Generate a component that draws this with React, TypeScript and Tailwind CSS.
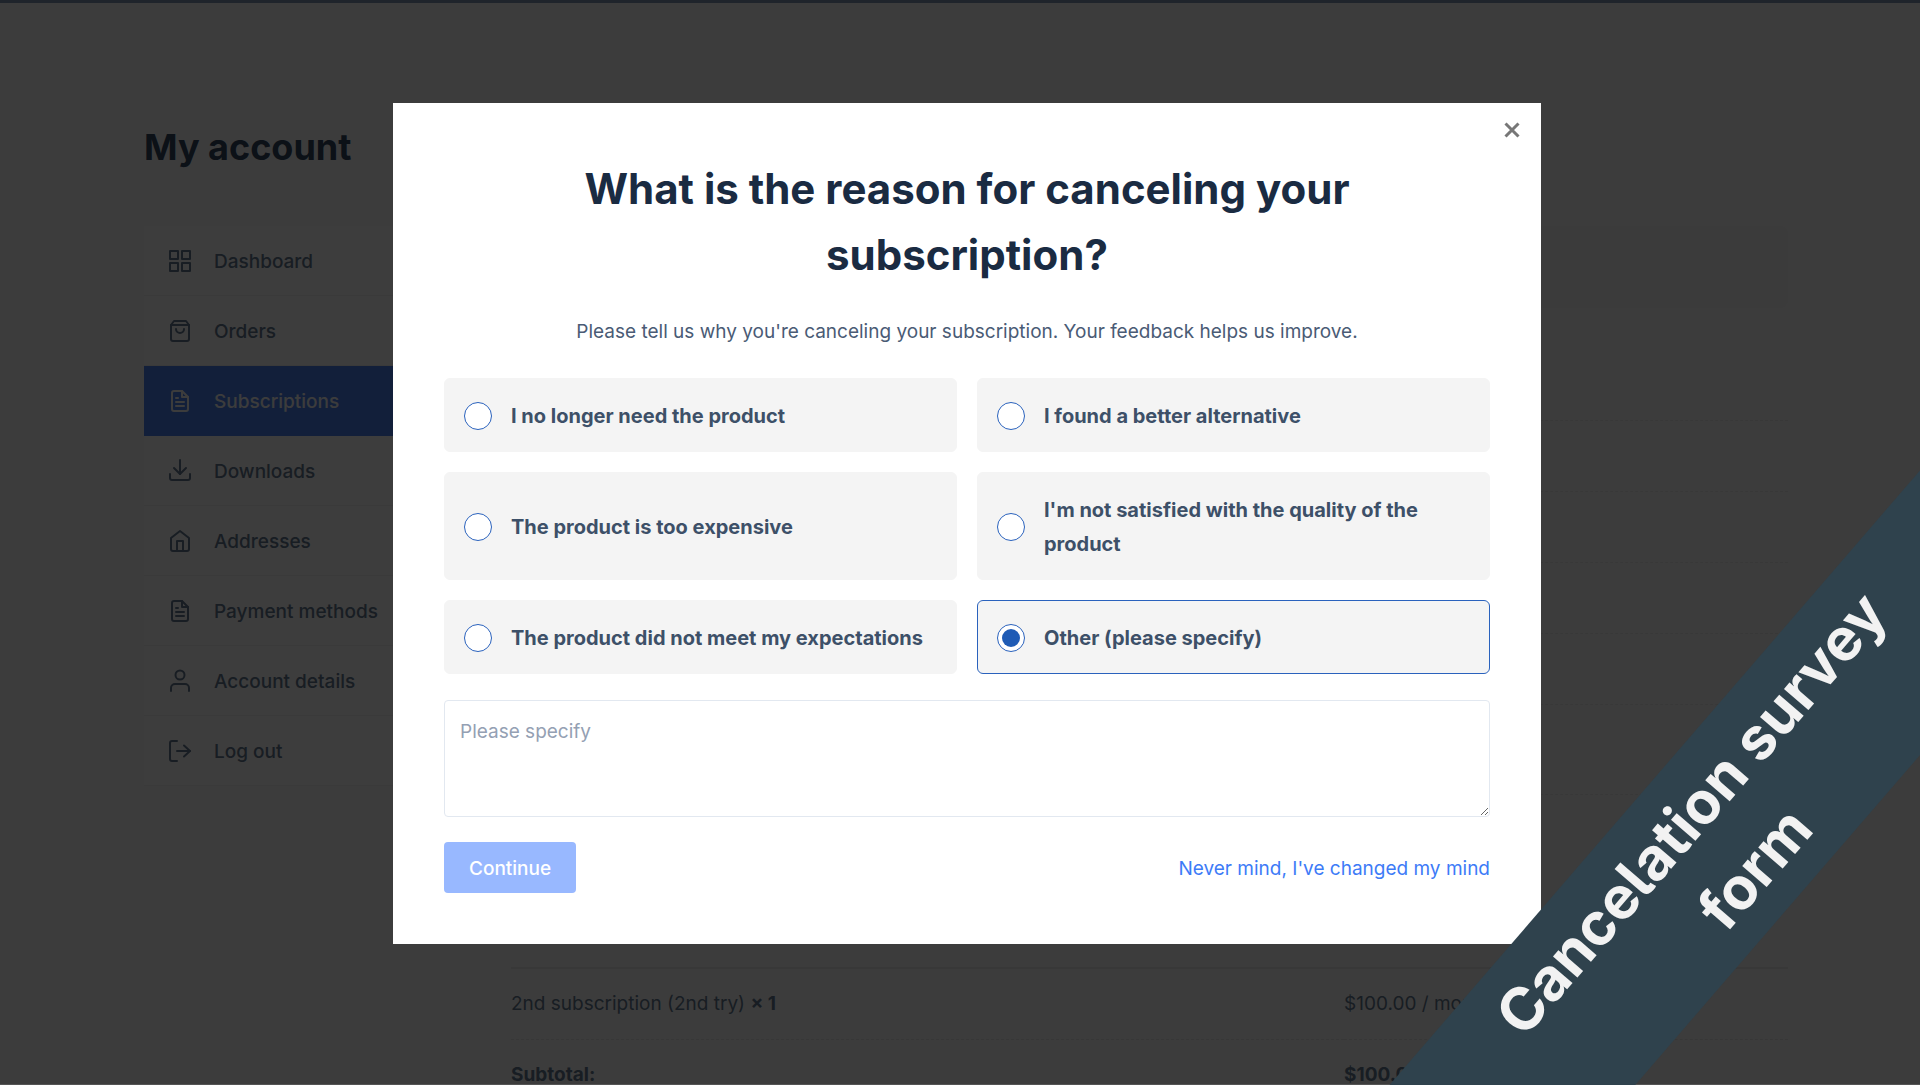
import { useState } from "react";
import type { ReactNode } from "react";

const iconPaths: Record<string, ReactNode> = {
  grid: (
    <>
      <rect x="2" y="2" width="8" height="8" />
      <rect x="14" y="2" width="8" height="8" />
      <rect x="2" y="14" width="8" height="8" />
      <rect x="14" y="14" width="8" height="8" />
    </>
  ),
  bag: (
    <>
      <path d="M6 2h12l3 4v14a2 2 0 0 1-2 2H5a2 2 0 0 1-2-2V6z" />
      <path d="M3 6h18" />
      <path d="M8 10a4 4 0 0 0 8 0" />
    </>
  ),
  file: (
    <>
      <path d="M14 2H6a2 2 0 0 0-2 2v16a2 2 0 0 0 2 2h12a2 2 0 0 0 2-2V8z" />
      <path d="M14 2v6h6" />
      <path d="M8 9h2M8 13h8M8 17h8" />
    </>
  ),
  download: (
    <>
      <path d="M2 15v4a2 2 0 0 0 2 2h16a2 2 0 0 0 2-2v-4" />
      <path d="M6 9l6 6 6-6" />
      <path d="M12 15V1" />
    </>
  ),
  home: (
    <>
      <path d="M3 9l9-7 9 7v11a2 2 0 0 1-2 2H5a2 2 0 0 1-2-2z" />
      <path d="M9 22V12h6v10" />
    </>
  ),
  user: (
    <>
      <path d="M3 22v-3a4 4 0 0 1 4-4h10a4 4 0 0 1 4 4v3" />
      <circle cx="12" cy="6" r="4.500" />
    </>
  ),
  logout: (
    <>
      <path d="M9 22H4a2 2 0 0 1-2-2V4a2 2 0 0 1 2-2h5" />
      <path d="M16 17.500l6-5.500-6-5.500" />
      <path d="M22 12H9" />
    </>
  ),
};

function Icon({ name }: { name: string }) {
  return (
    <svg
      viewBox="0 0 24 24"
      className="size-6 shrink-0"
      fill="none"
      stroke="currentColor"
      strokeWidth="2"
      strokeLinecap="round"
      strokeLinejoin="round"
      aria-hidden="true"
    >
      {iconPaths[name]}
    </svg>
  );
}

const navItems = [
  { label: "Dashboard", icon: "grid" },
  { label: "Orders", icon: "bag" },
  { label: "Subscriptions", icon: "file", active: true },
  { label: "Downloads", icon: "download" },
  { label: "Addresses", icon: "home" },
  { label: "Payment methods", icon: "file" },
  { label: "Account details", icon: "user" },
  { label: "Log out", icon: "logout" },
];

const reasons = [
  "I no longer need the product",
  "I found a better alternative",
  "The product is too expensive",
  "I'm not satisfied with the quality of the product",
  "The product did not meet my expectations",
  "Other (please specify)",
];

function AccountNav() {
  return (
    <nav className="w-80 shrink-0 self-start bg-[#f4f4f4]">
      <ul>
        {navItems.map((item) => (
          <li key={item.label}>
            <a
              href="#"
              className={
                item.active
                  ? "flex h-[70px] items-center gap-[22px] bg-[#487ce8] px-6 text-[#f0f0f0]"
                  : "flex h-[70px] items-center gap-[22px] border-b border-[#e8e8e8] px-6 text-[#60748a]"
              }
            >
              <Icon name={item.icon} />
              <span className="pt-[3px] font-medium">{item.label}</span>
            </a>
          </li>
        ))}
      </ul>
    </nav>
  );
}

function SubscriptionDetails() {
  return (
    <section className="min-w-0 flex-1 text-[#60748a]">
      <div className="h-[82px] rounded-lg bg-[#e9e9e9]" />
      <div className="mt-10 border-b border-dashed border-[#e0e0e0] pt-[72px]" />
      <div className="h-[71px] border-b border-dashed border-[#e0e0e0]" />
      <div className="h-[71px] border-b border-dashed border-[#e0e0e0]" />
      <div className="h-[71px] border-b border-dashed border-[#e0e0e0]" />
      <div className="h-[71px] border-b border-dashed border-[#e0e0e0]" />
      <div className="h-[90px] border-b border-dashed border-[#e0e0e0]" />
      <table className="mt-[172px] w-full table-fixed border-t-2 border-[#dedede] text-left">
        <tbody>
          <tr className="h-[71px] border-b border-dashed border-[#dcdcdc]">
            <td className="w-[833px]">
              2nd subscription (2nd try) <strong className="font-bold">× 1</strong>
            </td>
            <td>$100.00 / month</td>
          </tr>
          <tr className="h-[71px] font-bold">
            <th scope="row">Subtotal:</th>
            <td>$100.00</td>
          </tr>
        </tbody>
      </table>
    </section>
  );
}

function SurveyDialog() {
  const [selected, setSelected] = useState(5);
  return (
    <div
      role="dialog"
      aria-modal="true"
      aria-labelledby="survey-title"
      className="relative w-full max-w-[1148px] bg-white px-[51px] pt-[53px] pb-[51px]"
    >
      <button type="button" aria-label="Close" className="absolute top-[15px] right-[17px] grid size-6 place-items-center text-[#777777]">
        <svg viewBox="0 0 16 16" className="size-4" fill="none" stroke="currentColor" strokeWidth="3" aria-hidden="true">
          <path d="M1.500 1.500l13 13M14.500 1.500l-13 13" />
        </svg>
      </button>
      <h2 id="survey-title" className="mx-auto max-w-[860px] text-center text-[42px] leading-[66px] font-bold text-[#1a2b42]">
        What is the reason for canceling your subscription?
      </h2>
      <p className="mt-[27px] text-center leading-[34px] text-[#4a5b75]">
        Please tell us why you're canceling your subscription. Your feedback helps us improve.
      </p>
      <form onSubmit={(e) => e.preventDefault()}>
        <fieldset className="mt-[29px] grid grid-cols-2 gap-5">
          <legend className="sr-only">Reason</legend>
          {reasons.map((reason, i) => (
            <label
              key={reason}
              className="flex cursor-pointer items-center gap-[19px] rounded-md border border-[#f4f4f4] bg-[#f4f4f4] pt-5 pr-5 pb-[18px] pl-[19px] text-[20px] leading-[34px] font-bold text-[#3d5068] has-checked:border-[#2a62bd]"
            >
              <input
                type="radio"
                name="reason"
                checked={selected === i}
                onChange={() => setSelected(i)}
                className="grid size-7 shrink-0 appearance-none place-items-center rounded-full border border-[#2a62bd] bg-white before:size-[18px] before:rounded-full checked:before:bg-[#1f5bb5]"
              />
              <span>{reason}</span>
            </label>
          ))}
        </fieldset>
        <textarea
          aria-label="Please specify"
          placeholder="Please specify"
          className="mt-[26px] block h-[117px] w-full resize-y rounded border border-[#e2e8f0] px-[15px] py-[14px] leading-[34px] placeholder:text-[#94a0b3]"
        />
        <div className="mt-[25px] flex items-center justify-between">
          <button type="submit" disabled className="h-[51px] rounded bg-[#98b8ff] px-[25px] pt-1 font-medium text-white">
            Continue
          </button>
          <a href="#" className="pt-1 text-[#3d7bf7]">
            Never mind, I've changed my mind
          </a>
        </div>
      </form>
    </div>
  );
}

export default function App() {
  return (
    <div className="relative h-screen overflow-hidden bg-[#f0f0f0] font-['Inter',sans-serif] text-[19px]">
      <header className="h-[3px] bg-[#7c90ac]" />
      <main className="px-[7.5%] pt-[120px] pr-[132px]">
        <h1 className="text-[36px] leading-[48px] font-bold text-[#30445c]">My account</h1>
        <div className="mt-[55px] flex gap-[47px]">
          <AccountNav />
          <SubscriptionDetails />
        </div>
      </main>
      <div className="absolute inset-0 flex items-start justify-center border-b border-[#555555] bg-black/75 pt-[103px] pl-[14px]">
        <SurveyDialog />
      </div>
      <div className="absolute -right-[353px] bottom-[151px] flex h-[186px] w-[1100px] rotate-[-49.2deg] items-center justify-center bg-[#2f424d] text-center text-[59px] leading-[84px] font-bold text-[#f2f2f2] [font-feature-settings:'cv05']">
        <p className="max-w-[640px]">Cancelation survey form</p>
      </div>
    </div>
  );
}
